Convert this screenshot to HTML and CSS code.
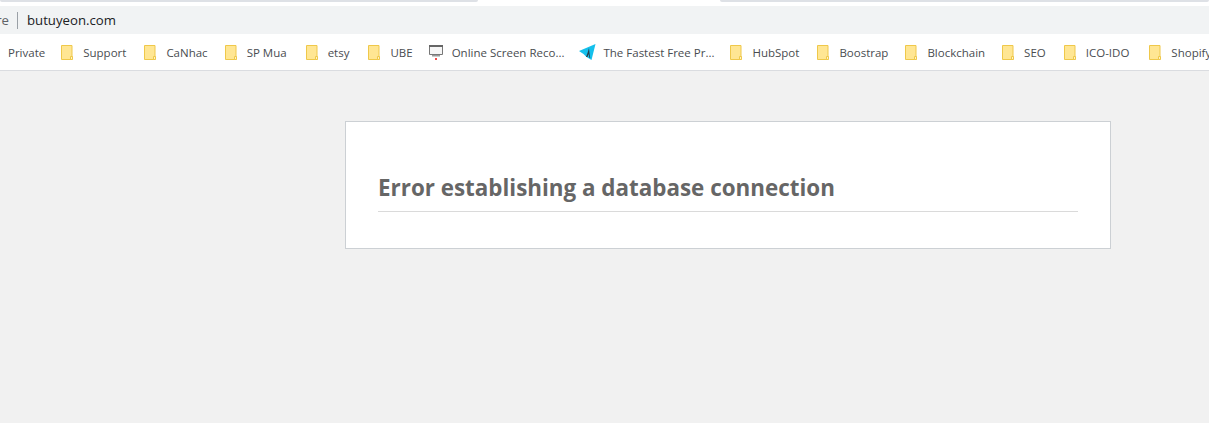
FILE: index.html
```html
<!DOCTYPE html>
<html lang="en">
<head>
<meta charset="utf-8">
<title>Error</title>
<link rel="stylesheet" href="styles.css">
</head>
<body>
<svg class="defs" width="0" height="0"><defs>
<symbol id="folder" viewBox="0 0 12 15"><path d="M.5.500h10.500v14H.500z" fill="#ffe693" stroke="#efc84a"/><path d="M9.500 11.500h2v3h-2z" fill="#fff3c4" stroke="#efc84a"/></symbol>
</defs></svg>
<div class="tabstrip"><div class="edge left"></div><div class="tab"></div><div class="edge"></div></div>
<div class="omnibox"><span class="secure"><span>re</span></span><span class="divider"></span><span class="url">butuyeon.com</span></div>
<nav class="bookmarks">
<a class="bm first">Private</a>
<a class="bm f1"><svg class="folder"><use href="#folder"/></svg>Support</a>
<a class="bm f2"><svg class="folder"><use href="#folder"/></svg>CaNhac</a>
<a class="bm f3"><svg class="folder"><use href="#folder"/></svg>SP Mua</a>
<a class="bm f4"><svg class="folder"><use href="#folder"/></svg>etsy</a>
<a class="bm f5"><svg class="folder"><use href="#folder"/></svg>UBE</a>
<a class="bm f6"><svg class="icon" viewBox="0 0 16 16"><path d="M1.500 1.500h13v9h-13z" fill="#f6f6f6" stroke="#777"/><path d="M1 1h14v2H1z" fill="#666"/><path d="M4 11h8v1.500H4z" fill="#999"/><path d="M7 14h2v2H7z" fill="#f04a4a"/></svg>Online Screen Reco...</a>
<a class="bm f7"><svg class="plane" viewBox="0 0 17 17"><path d="M0 7 16.500 0 12.500 16 7.500 13 4.500 10z" fill="#14c0ec"/><path d="M10 4 8.500 9 7 13h1.500L9.500 10l1 4h.7L10.500 9z" fill="#25404e"/></svg>The Fastest Free Pr...</a>
<a class="bm f8"><svg class="folder"><use href="#folder"/></svg>HubSpot</a>
<a class="bm f9"><svg class="folder"><use href="#folder"/></svg>Boostrap</a>
<a class="bm f10"><svg class="folder"><use href="#folder"/></svg>Blockchain</a>
<a class="bm f11"><svg class="folder"><use href="#folder"/></svg>SEO</a>
<a class="bm f12"><svg class="folder"><use href="#folder"/></svg>ICO-IDO</a>
<a class="bm f13"><svg class="folder"><use href="#folder"/></svg>Shopify</a>
</nav>
<main class="page">
<section class="card"><h1 class="title">Error establishing a database connection</h1></section>
</main>
</body>
</html>
```
FILE: styles.css
```css
* { box-sizing: border-box; }
html, body { margin: 0; padding: 0; }
body { width: 1209px; height: 423px; overflow: hidden; background: #f1f1f1; font-family: "Open Sans", "Noto Sans", sans-serif; }
.defs { display: block; height: 0; }
.tabstrip { height: 6px; background: #fff; display: flex; align-items: flex-start; }
.edge { flex: 1; height: 2px; background: #dee1e6; border-radius: 0 0 6px 6px; }
.edge.left { flex: none; width: 478px; }
.tab { width: 242px; height: 2px; background: #fff; flex: none; }
.omnibox { height: 28px; background: #f1f3f4; display: flex; align-items: center; }
.secure { width: 9px; margin-right: 8px; overflow: hidden; display: flex; justify-content: flex-end; font-size: 13.200px; color: #5f6368; }
.divider { width: 1px; height: 17px; background: #9aa0a6; flex: none; }
.url { font-size: 13.200px; color: #202124; margin-left: 9px; }
.bookmarks { height: 37px; background: #fff; border-bottom: 1px solid #dadce0; display: flex; align-items: center; overflow: hidden; white-space: nowrap; font-size: 11.500px; color: #494c50; padding-left: 8px; }
.bm { display: flex; align-items: center; flex: none; }
.folder { width: 12px; height: 15px; margin-right: 10px; flex: none; }
.icon { width: 16px; height: 16px; margin-right: 8px; flex: none; }
.plane { width: 17px; height: 17px; margin-right: 7px; flex: none; }
.f1 { margin-left: 16px; }
.f2 { margin-left: 18px; }
.f3 { margin-left: 17px; }
.f4 { margin-left: 19px; }
.f5 { margin-left: 19px; }
.f6 { margin-left: 15px; }
.f7 { margin-left: 15px; }
.f8 { margin-left: 16px; }
.f9 { margin-left: 18px; }
.f10 { margin-left: 17px; }
.f11 { margin-left: 17px; }
.f12 { margin-left: 18px; }
.f13 { margin-left: 20px; }
.page { display: flex; padding: 50px 0 0 345px; }
.card { width: 766px; height: 128px; background: #fff; border: 1px solid #ccd0d4; padding: 50px 32px 0; }
.title { margin: 0; height: 40px; border-bottom: 1px solid #dadada; font-size: 22.400px; line-height: 32px; font-weight: 700; color: #666; }
```
